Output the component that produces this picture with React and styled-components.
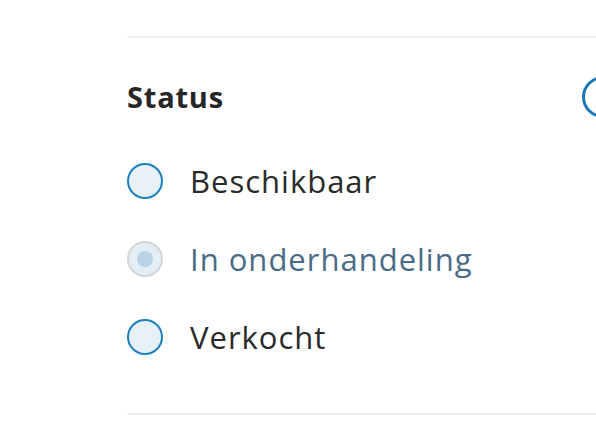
import React from "react";
import styled, { createGlobalStyle } from "styled-components";

const GlobalStyle = createGlobalStyle`
  html, body {
    margin: 0;
    padding: 0;
    background: #ffffff;
    overflow: hidden;
  }
  body {
    font-family: "Open Sans", "Liberation Sans", sans-serif;
  }
`;

const Page = styled.div`
  width: 596px;
  height: 427px;
  overflow: hidden;
  padding-left: 127px;
  box-sizing: border-box;
`;

const Section = styled.div`
  width: 497px;
  padding-top: 36px;
`;

const Divider = styled.div`
  height: 2px;
  background: #efefef;
`;

const Header = styled.div`
  display: flex;
  align-items: center;
  justify-content: space-between;
  margin-top: 38px;
  height: 42px;
`;

const Title = styled.h3`
  margin: 0;
  font-size: 29px;
  line-height: 42px;
  font-weight: 700;
  letter-spacing: 0.8px;
  color: #262626;
`;

const Toggle = styled.div`
  width: 42px;
  height: 42px;
  border-radius: 50%;
  border: 3px solid #1b76b9;
  box-sizing: border-box;
`;

const Options = styled.div`
  display: flex;
  flex-direction: column;
  gap: 42px;
  margin-top: 45px;
  margin-bottom: 58px;
`;

const Option = styled.label`
  display: flex;
  align-items: center;
  gap: 27px;
  height: 36px;
  font-size: 31px;
  letter-spacing: 1px;
  line-height: 36px;
  color: ${(p) => (p.disabled ? "#4a6b87" : "#2a2a2a")};
`;

const Radio = styled.span`
  flex: none;
  width: 36px;
  height: 36px;
  border-radius: 50%;
  box-sizing: border-box;
  background: ${(p) => (p.disabled ? "#e3eef5" : "#e6f1f8")};
  border: 2px solid ${(p) => (p.disabled ? "#d3d6d8" : "#1e7fc0")};
  display: flex;
  align-items: center;
  justify-content: center;

  &::after {
    content: "";
    display: ${(p) => (p.checked ? "block" : "none")};
    width: 16px;
    height: 16px;
    border-radius: 50%;
    background: #b7d3e4;
  }
`;

const options = [
  { label: "Beschikbaar" },
  { label: "In onderhandeling", disabled: true, checked: true },
  { label: "Verkocht" },
];

export default function App() {
  return (
    <Page>
      <GlobalStyle />
      <Section>
        <Divider />
        <Header>
          <Title>Status</Title>
          <Toggle />
        </Header>
        <Options>
          {options.map((o) => (
            <Option key={o.label} disabled={o.disabled}>
              <Radio disabled={o.disabled} checked={o.checked} />
              {o.label}
            </Option>
          ))}
        </Options>
        <Divider />
      </Section>
    </Page>
  );
}
